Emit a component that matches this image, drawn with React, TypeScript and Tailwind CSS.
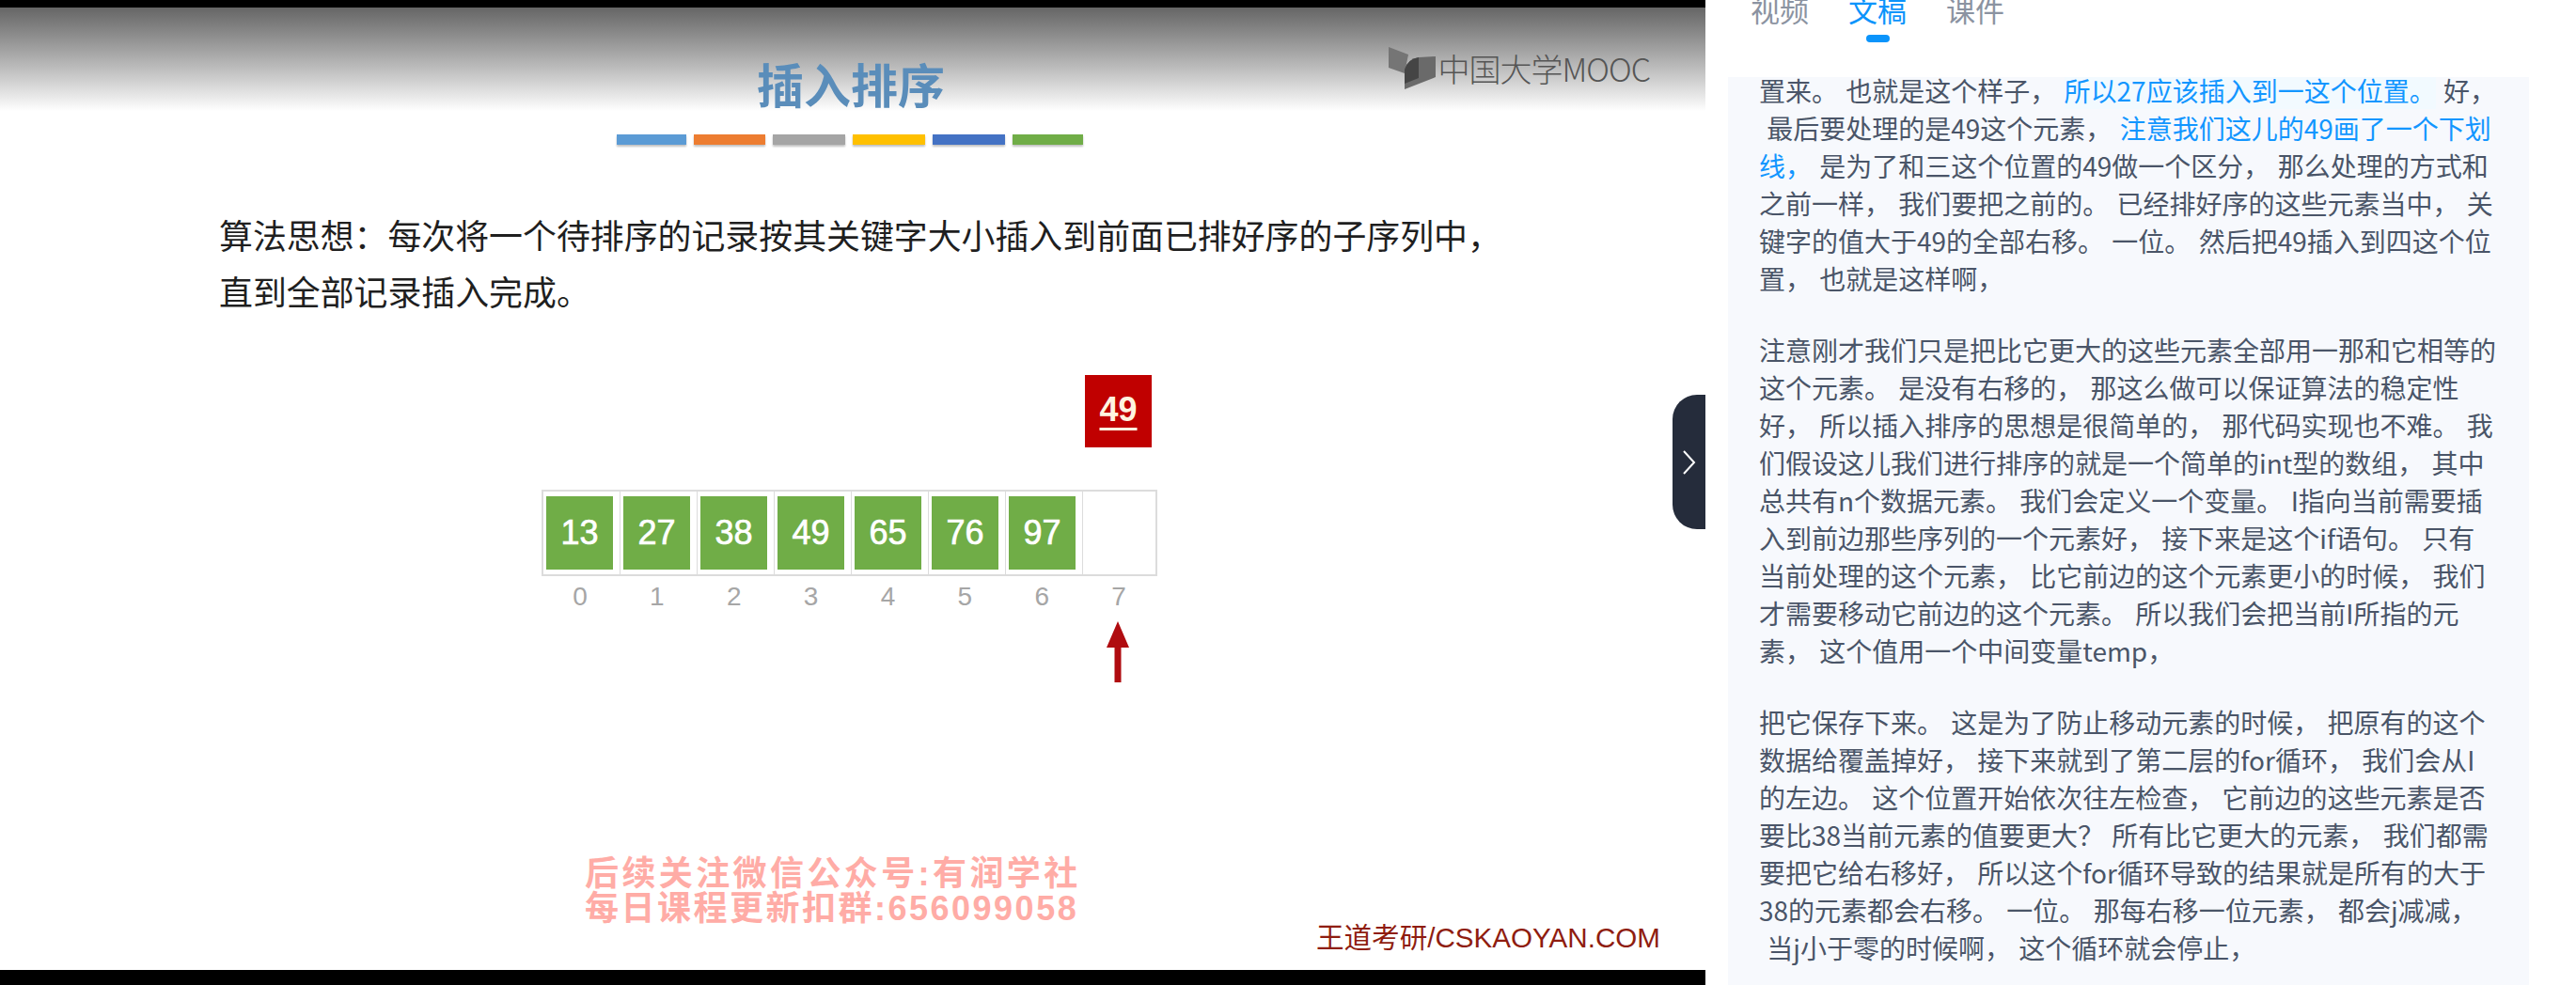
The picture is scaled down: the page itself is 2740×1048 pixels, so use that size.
const sans = "font-['Liberation_Sans','Noto_Sans_CJK_SC',sans-serif]";
const cjk = "font-['Noto_Sans_CJK_SC',sans-serif]";

const barColors = [
  { color: 'bg-[#5b9bd5]', width: 'w-[74px]' },
  { color: 'bg-[#ed7d31]', width: 'w-[76px]' },
  { color: 'bg-[#a5a5a5]', width: 'w-[77px]' },
  { color: 'bg-[#ffc000]', width: 'w-[77px]' },
  { color: 'bg-[#4472c4]', width: 'w-[77px]' },
  { color: 'bg-[#70ad47]', width: 'w-[75px]' },
];

const cells = ['13', '27', '38', '49', '65', '76', '97', ''];

type Line = { before?: string; blue?: string; after?: string; tint?: boolean };

const paragraphs: Line[][] = [
  [
    { before: '置来。 也就是这个样子， ', blue: '所以27应该插入到一这个位置。', after: ' 好，', tint: true },
    { before: ' 最后要处理的是49这个元素， ', blue: '注意我们这儿的49画了一个下划' },
    { blue: '线，', after: ' 是为了和三这个位置的49做一个区分， 那么处理的方式和' },
    { before: '之前一样， 我们要把之前的。 已经排好序的这些元素当中， 关' },
    { before: '键字的值大于49的全部右移。 一位。 然后把49插入到四这个位' },
    { before: '置， 也就是这样啊，' },
  ],
  [
    { before: '注意刚才我们只是把比它更大的这些元素全部用一那和它相等的' },
    { before: '这个元素。 是没有右移的， 那这么做可以保证算法的稳定性' },
    { before: '好， 所以插入排序的思想是很简单的， 那代码实现也不难。 我' },
    { before: '们假设这儿我们进行排序的就是一个简单的int型的数组， 其中' },
    { before: '总共有n个数据元素。 我们会定义一个变量。 I指向当前需要插' },
    { before: '入到前边那些序列的一个元素好， 接下来是这个if语句。 只有' },
    { before: '当前处理的这个元素， 比它前边的这个元素更小的时候， 我们' },
    { before: '才需要移动它前边的这个元素。 所以我们会把当前I所指的元' },
    { before: '素， 这个值用一个中间变量temp，' },
  ],
  [
    { before: '把它保存下来。 这是为了防止移动元素的时候， 把原有的这个' },
    { before: '数据给覆盖掉好， 接下来就到了第二层的for循环， 我们会从I' },
    { before: '的左边。 这个位置开始依次往左检查， 它前边的这些元素是否' },
    { before: '要比38当前元素的值要更大？ 所有比它更大的元素， 我们都需' },
    { before: '要把它给右移好， 所以这个for循环导致的结果就是所有的大于' },
    { before: '38的元素都会右移。 一位。 那每右移一位元素， 都会j减减，' },
    { before: ' 当j小于零的时候啊， 这个循环就会停止，' },
  ],
];

function MoocLogo() {
  return (
    <svg width="50" height="45" viewBox="0 0 50 45" className="shrink-0">
      <path d="M0 0 L21 8 L17 28 L0 22 Z" fill="#757575" />
      <path d="M50 10 L50 32 L17 45 L17 24 Q20 13 32 11 Z" fill="#6a6a6a" />
      <path d="M17 24 Q20 13 32 11 L32 33 L17 39 Z" fill="#454545" />
    </svg>
  );
}

function Slide() {
  return (
    <div className="flex-1 flex flex-col bg-white min-h-0">
      <div className="h-[110px] shrink-0 flex items-start bg-gradient-to-b from-[#666666] to-[#ffffff]">
        <h1 className={`ml-[805px] mt-[50px] text-[50px] leading-[60px] font-bold text-[#5a8dba] whitespace-nowrap ${cjk}`}>
          插入排序
        </h1>
        <div className="ml-auto mr-[59px] mt-[42px] flex items-center gap-[3px]">
          <MoocLogo />
          <span className={`text-[34px] leading-[44px] font-light text-[#555555] tracking-[-1px] whitespace-nowrap ${cjk}`}>
            中国大学MOOC
          </span>
        </div>
      </div>

      <div className="flex gap-[8px] ml-[656px] mt-[25px]">
        {barColors.map((b) => (
          <div key={b.color} className={`h-[11px] ${b.width} ${b.color} shadow-[0_2px_2px_rgba(0,0,0,0.25)]`} />
        ))}
      </div>

      <div className={`ml-[233px] mt-[65px] text-[35.9px] leading-[60px] text-[#1f1f1f] whitespace-nowrap ${cjk}`}>
        <div>算法思想：每次将一个待排序的记录按其关键字大小插入到前面已排好序的子序列中，</div>
        <div>直到全部记录插入完成。</div>
      </div>

      <div className={`ml-[1154px] mt-[60px] w-[71px] h-[77px] bg-[#c00000] flex justify-center pt-[17px] ${sans}`}>
        <span className="text-[36px] leading-[40px] font-bold text-[#fff4e0] underline underline-offset-[7px] decoration-[3px]">49</span>
      </div>

      <div className="ml-[576px] mt-[45px] w-[655px] h-[92px] flex border-2 border-[#dcdcdc] bg-white">
        {cells.map((n, i) => (
          <div key={i} className={i < 7 ? 'w-[82px] flex items-center pl-[3px] border-r border-[#dcdcdc]' : 'flex-1'}>
            {n && (
              <div className={`w-[71px] h-[78px] bg-[#70ad47] flex items-center justify-center text-white text-[36px] [-webkit-text-stroke:0.7px_white] ${sans}`}>
                {n}
              </div>
            )}
          </div>
        ))}
      </div>

      <div className="ml-[576px] mt-[5px] w-[655px] flex">
        {cells.map((_, i) => (
          <div key={i} className={`flex-1 text-center text-[28px] leading-[34px] text-[#a6a6a6] ${sans}`}>
            {i}
          </div>
        ))}
      </div>

      <svg width="24" height="65" viewBox="0 0 24 65" className="ml-[1177px] mt-[9px] shrink-0">
        <path d="M12 0 L24 28 L15.5 28 L15.5 65 L8.5 65 L8.5 28 L0 28 Z" fill="#b00c10" />
      </svg>

      <div className="ml-[622px] mr-[48px] mt-[185px] flex justify-between items-start">
        <div className={`text-[36px] leading-[37px] font-bold text-[#ffaca6] whitespace-nowrap ${sans}`}>
          <div className="tracking-[3.4px]">后续关注微信公众号:有润学社</div>
          <div className="tracking-[2.5px]">每日课程更新扣群:656099058</div>
        </div>
        <div className={`mt-[69px] text-[29.6px] leading-[36px] text-[#8f1d10] whitespace-nowrap ${sans}`}>
          王道考研/CSKAOYAN.COM
        </div>
      </div>
    </div>
  );
}

function Transcript() {
  return (
    <div className="flex-1 min-w-0 flex flex-col overflow-hidden">
      <div className="h-[82px] shrink-0 pl-[48px] flex gap-[42px]">
        {['视频', '文稿', '课件'].map((t) => (
          <div key={t} className="relative -mt-[10px]">
            <span className={`block text-[31px] leading-[40px] whitespace-nowrap ${cjk} ${t === '文稿' ? 'text-[#0b94fb]' : 'text-[#8b93a1]'}`}>
              {t}
            </span>
            {t === '文稿' && (
              <div className="absolute left-[19px] top-[47px] w-[25px] h-[8px] rounded-full bg-[#0b94fb]" />
            )}
          </div>
        ))}
      </div>
      <div className={`ml-[24px] w-[852px] flex-1 bg-[#f7f9fd] pl-[33px] overflow-hidden text-[28px] leading-[40px] [word-spacing:2px] text-[#4a5568] ${cjk}`}>
        {paragraphs.map((lines, i) => (
          <div key={i} className={i === 0 ? '-mt-[6px]' : 'mt-[36px]'}>
            {lines.map((l, j) => (
              <div key={j} className="whitespace-pre">
                {l.before}
                {l.blue && (
                  <span className={`text-[#1296ff] ${l.tint ? 'bg-[#f2faff]' : ''}`}>{l.blue}</span>
                )}
                {l.after}
              </div>
            ))}
          </div>
        ))}
      </div>
    </div>
  );
}

export default function App() {
  return (
    <div className="w-[2740px] h-[1048px] flex bg-white overflow-hidden">
      <div className="relative w-[1814px] shrink-0 flex flex-col bg-black pt-2 pb-4">
        <Slide />
        <button className="absolute right-0 top-[420px] w-[35px] h-[143px] rounded-l-[26px] bg-[#252c3b] flex items-center justify-center">
          <svg width="16" height="28" viewBox="0 0 16 28" fill="none">
            <path d="M2 2 L13 14 L2 26" stroke="#ffffff" strokeWidth="2" />
          </svg>
        </button>
      </div>
      <Transcript />
    </div>
  );
}
